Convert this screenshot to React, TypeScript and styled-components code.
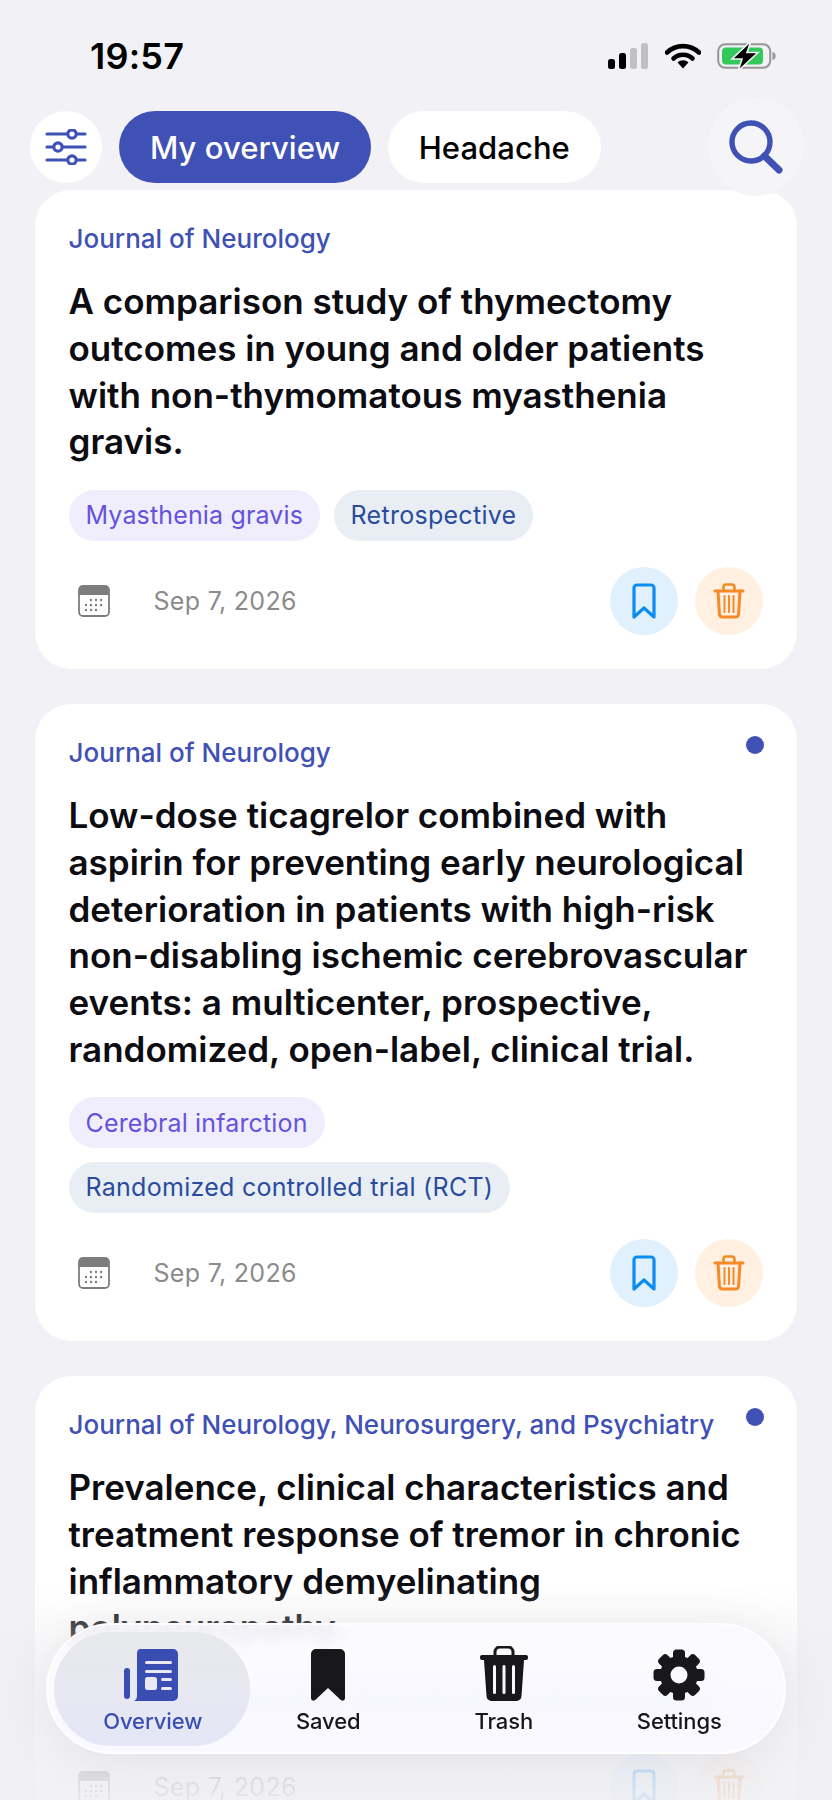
import * as React from 'react';
import styled, { createGlobalStyle } from 'styled-components';

const GlobalStyle = createGlobalStyle`
  html, body {
    margin: 0;
    padding: 0;
    background: #f1f1f6;
  }
  * {
    box-sizing: border-box;
  }
`;

const Screen = styled.div`
  position: relative;
  width: 832px;
  height: 1800px;
  overflow: hidden;
  background: #f1f1f6;
  font-family: Inter, "Noto Sans", sans-serif;
  color: #0c0c12;
`;

const StatusBar = styled.div`
  display: flex;
  align-items: center;
  justify-content: space-between;
  height: 111px;
  padding: 0 55px 0 90px;
`;

const Time = styled.div`
  font-size: 36px;
  font-weight: 600;
  letter-spacing: 0.2px;
  color: #000;
`;

const StatusIcons = styled.div`
  display: flex;
  align-items: center;
  gap: 16px;
`;

const Header = styled.div`
  position: relative;
  z-index: 1;
  display: flex;
  align-items: center;
  height: 72px;
  padding: 0 28px 0 30px;
`;

const RoundButton = styled.div`
  display: flex;
  align-items: center;
  justify-content: center;
  width: 72px;
  height: 72px;
  margin-right: 17px;
  border-radius: 50%;
  background: #fff;
`;

const Tab = styled.div<{ $active?: boolean }>`
  display: flex;
  align-items: center;
  height: 72px;
  margin-right: 16.5px;
  padding: 0 31px;
  border-radius: 36px;
  font-size: 31px;
  font-weight: 500;
  letter-spacing: 0.05px;
  color: ${(p) => (p.$active ? '#fff' : '#000')};
  background: ${(p) => (p.$active ? '#3f51b5' : '#fff')};
`;

const SearchButton = styled.div`
  display: flex;
  align-items: center;
  justify-content: center;
  width: 96px;
  height: 98px;
  margin: -13px 0 -13px auto;
  border-radius: 50%;
  background: rgba(244, 244, 248, 0.95);
`;

const List = styled.div`
  display: flex;
  flex-direction: column;
  gap: 35px;
  padding: 7px 35px 0;
`;

const Card = styled.article`
  padding: 34px 34px 34px 33.5px;
  border-radius: 36px;
  background: #fff;
`;

const CardTop = styled.div`
  display: flex;
  align-items: flex-start;
  justify-content: space-between;
  height: 32px;
`;

const Journal = styled.div`
  font-size: 26px;
  line-height: 30px;
  font-weight: 500;
  color: #3f51b5;
`;

const UnreadDot = styled.span`
  width: 18px;
  height: 18px;
  margin: -2px -1px 0 0;
  border-radius: 50%;
  background: #3f51b5;
`;

const Title = styled.h2`
  margin: 22px 0 0;
  font-size: 35px;
  line-height: 46.75px;
  font-weight: 555;
  color: #0c0c12;
`;

const Tags = styled.div`
  display: flex;
  flex-wrap: wrap;
  gap: 13.5px;
  margin-top: 24.5px;
`;

const Tag = styled.span<{ $kind: 'topic' | 'type' }>`
  display: inline-flex;
  align-items: center;
  height: 51px;
  padding: 0 17px;
  border-radius: 26px;
  font-size: 25px;
  letter-spacing: ${(p) => (p.$kind === 'topic' ? 0.15 : 0.28)}px;
  color: ${(p) => (p.$kind === 'topic' ? '#6552dc' : '#2a4c9c')};
  background: ${(p) => (p.$kind === 'topic' ? '#f0eefd' : '#e9eef5')};
`;

const CardFooter = styled.div`
  display: flex;
  align-items: center;
  margin-top: 26.5px;
`;

const DateIcon = styled.div`
  display: flex;
  width: 32px;
  margin-left: 9px;
  margin-right: 44px;
`;

const DateText = styled.span`
  font-size: 25px;
  letter-spacing: 0.3px;
  color: #8b8b8b;
`;

const Actions = styled.div`
  display: flex;
  gap: 17px;
  margin-left: auto;
`;

const ActionButton = styled.div<{ $tone: 'save' | 'remove' }>`
  display: flex;
  align-items: center;
  justify-content: center;
  width: 68px;
  height: 68px;
  border-radius: 50%;
  background: ${(p) => (p.$tone === 'save' ? '#e0f0fd' : '#fff0e2')};
`;

const BottomFade = styled.div`
  position: absolute;
  left: 0;
  right: 0;
  bottom: 0;
  height: 215px;
  background: linear-gradient(
    to bottom,
    rgba(240, 240, 244, 0) 0%,
    rgba(240, 240, 244, 0.5) 35%,
    rgba(240, 240, 244, 0.9) 100%
  );
`;

const NavBar = styled.nav`
  position: absolute;
  left: 46px;
  top: 1623px;
  display: grid;
  grid-template-columns: repeat(4, 175.5px);
  width: 740px;
  height: 131px;
  padding: 0 0 0 17px;
  border: 2px solid rgba(255, 255, 255, 0.9);
  border-radius: 66px;
  background: rgba(250, 250, 255, 0.9);
  backdrop-filter: blur(5px);
  box-shadow: 0 4px 50px rgba(60, 60, 80, 0.1);
`;

const NavItem = styled.div<{ $active?: boolean }>`
  position: relative;
  display: flex;
  flex-direction: column;
  align-items: center;
  padding-top: 22px;
  color: ${(p) => (p.$active ? '#3a4db3' : '#17171c')};

  ${(p) =>
    p.$active &&
    `
    &::before {
      content: '';
      position: absolute;
      top: 7px;
      bottom: 6px;
      left: -11px;
      right: -9px;
      border-radius: 58px;
      background: linear-gradient(to bottom, #e8e9ec 0%, #e7e8f0 45%, #e5e6f7 100%);
    }
  `}
`;

const NavIcon = styled.div`
  position: relative;
  display: flex;
  align-items: flex-end;
  justify-content: center;
  height: 54px;
`;

const NavLabel = styled.span`
  position: relative;
  margin-top: 6px;
  font-size: 22px;
  line-height: 28px;
  font-weight: 500;
  letter-spacing: -0.1px;
`;

const SignalIcon = () => (
  <svg width="41" height="26" viewBox="0 0 41 26">
    <rect x="0" y="16" width="7" height="10" rx="2.5" fill="#000" />
    <rect x="11" y="10" width="7" height="16" rx="2.5" fill="#000" />
    <rect x="22" y="5" width="7" height="21" rx="2.5" fill="#c1c1c5" />
    <rect x="33" y="0" width="7" height="26" rx="2.5" fill="#c1c1c5" />
  </svg>
);

const WifiIcon = () => (
  <svg width="36" height="26" viewBox="0 0 36 26" fill="none">
    <path d="M2 9.5C11 1 25 1 34 9.5" stroke="#000" strokeWidth="4.6" strokeLinecap="round" />
    <path d="M8.5 15.5C13.8 10.5 22.2 10.5 27.5 15.5" stroke="#000" strokeWidth="4.6" strokeLinecap="round" />
    <path d="M12.6 19.4C15.6 16.6 20.4 16.6 23.4 19.4L18 25.4Z" fill="#000" />
  </svg>
);

const BatteryIcon = () => (
  <svg width="60" height="30" viewBox="0 0 60 30" fill="none">
    <rect x="1.2" y="3.2" width="52" height="23.6" rx="7" stroke="#969698" strokeWidth="2" />
    <rect x="5" y="6.5" width="41" height="17" rx="4" fill="#34c759" />
    <path d="M55.5 11C58 11.6 58.6 13 58.6 15C58.6 17 58 18.4 55.5 19Z" fill="#969698" />
    <path d="M34 0L15 18H25L21 30L41 11.5H30Z" fill="#000" stroke="#f1f1f6" strokeWidth="1.6" />
  </svg>
);

const FilterIcon = () => (
  <svg width="42" height="36" viewBox="0 0 42 36" fill="none" stroke="#3f51b5" strokeWidth="3.2" strokeLinecap="round">
    <path d="M2 5H22M32 5H40" />
    <path d="M2 18H8M18 18H40" />
    <path d="M2 31H22M32 31H40" />
    <circle cx="27" cy="5" r="4.2" fill="#fff" />
    <circle cx="13" cy="18" r="4.2" fill="#fff" />
    <circle cx="27" cy="31" r="4.2" fill="#fff" />
  </svg>
);

const SearchIcon = () => (
  <svg width="54" height="54" viewBox="0 0 54 54" fill="none" stroke="#3f51b5" strokeLinecap="round">
    <circle cx="22" cy="22" r="19" strokeWidth="5.4" />
    <path d="M35.5 36L50 50" strokeWidth="7" />
  </svg>
);

const calendarDots = [
  [13, 15], [18, 15], [23, 15],
  [8, 20], [13, 20], [18, 20], [23, 20],
  [8, 25], [13, 25], [18, 25],
];

const CalendarIcon = () => (
  <svg width="32" height="32" viewBox="0 0 32 32" fill="none">
    <rect x="1" y="1" width="30" height="30" rx="4" fill="#fff" stroke="#7d7d7d" strokeWidth="1.8" />
    <path d="M1 5a4 4 0 0 1 4-4h22a4 4 0 0 1 4 4v5H1Z" fill="#7d7d7d" />
    <g fill="#7d7d7d">
      {calendarDots.map(([cx, cy]) => (
        <circle key={`${cx}-${cy}`} cx={cx} cy={cy} r="1.2" />
      ))}
    </g>
  </svg>
);

const BookmarkOutline = () => (
  <svg width="24" height="36" viewBox="0 0 24 36" fill="none">
    <path
      d="M2 5a3 3 0 0 1 3-3h14a3 3 0 0 1 3 3v29l-10-9-10 9Z"
      stroke="#0d8bf5"
      strokeWidth="3.2"
      strokeLinejoin="round"
    />
  </svg>
);

const TrashOutline = () => (
  <svg width="32" height="36" viewBox="0 0 32 36" fill="none" stroke="#f58a26" strokeLinecap="round" strokeLinejoin="round">
    <path d="M2 8H30" strokeWidth="3" />
    <path d="M10.5 8V4a2.5 2.5 0 0 1 2.5-2.5h6a2.5 2.5 0 0 1 2.5 2.5v4" strokeWidth="2.6" />
    <path d="M5 8l1.4 23a3 3 0 0 0 3 3h13.2a3 3 0 0 0 3-3L27 8" strokeWidth="3" />
    <path d="M11.5 13V29M16 13V29M20.5 13V29" strokeWidth="2" />
  </svg>
);

const NewsIcon = () => (
  <svg width="58" height="52" viewBox="0 0 58 52">
    <rect x="0" y="19" width="6" height="31" rx="3" fill="#3a4db3" />
    <path d="M16 0h33a5 5 0 0 1 5 5v42a5 5 0 0 1-5 5H10c2.5-1 3-3 3-6V4c0-2 1.5-4 3-4Z" fill="#3a4db3" />
    <rect x="21" y="12" width="27" height="3" rx="1.5" fill="#e8e9f4" />
    <rect x="21" y="21" width="27" height="3" rx="1.5" fill="#e8e9f4" />
    <rect x="21" y="28" width="12" height="13" rx="2.5" fill="#e8e9f4" />
    <rect x="37" y="29" width="11" height="3" rx="1.5" fill="#e8e9f4" />
    <rect x="37" y="38" width="11" height="3" rx="1.5" fill="#e8e9f4" />
  </svg>
);

const BookmarkSolid = () => (
  <svg width="34" height="52" viewBox="0 0 34 52">
    <path d="M0 5a5 5 0 0 1 5-5h24a5 5 0 0 1 5 5v44c0 2.5-2.5 3.5-4.5 1.7L17 39 4.5 50.7C2.5 52.5 0 51.5 0 49Z" fill="#17171c" />
  </svg>
);

const TrashSolid = () => (
  <svg width="48" height="55" viewBox="0 0 48 55">
    <path d="M15 9V6a5 5 0 0 1 5-5h8a5 5 0 0 1 5 5v3" fill="none" stroke="#17171c" strokeWidth="3" />
    <rect x="0" y="9" width="48" height="5" rx="2" fill="#17171c" />
    <path d="M4 14h40l-2.5 36a5 5 0 0 1-5 5h-25a5 5 0 0 1-5-5Z" fill="#17171c" />
    <rect x="13" y="19" width="3" height="29" rx="1.5" fill="#f8f8fd" />
    <rect x="22.5" y="19" width="3" height="29" rx="1.5" fill="#f8f8fd" />
    <rect x="32" y="19" width="3" height="29" rx="1.5" fill="#f8f8fd" />
  </svg>
);

const gearTeeth = [0, 45, 90, 135, 180, 225, 270, 315];

const GearIcon = () => (
  <svg width="52" height="52" viewBox="0 0 52 52">
    <mask id="gear-hole">
      <rect width="52" height="52" fill="#fff" />
      <circle cx="26" cy="26" r="8.5" fill="#000" />
    </mask>
    <g fill="#17171c" mask="url(#gear-hole)">
      <circle cx="26" cy="26" r="19" />
      {gearTeeth.map((angle) => (
        <rect key={angle} x="20" y="0.5" width="12" height="12" rx="3.5" transform={`rotate(${angle} 26 26)`} />
      ))}
    </g>
  </svg>
);

type Article = {
  journal: string;
  title: string;
  tags: { label: string; kind: 'topic' | 'type' }[];
  unread?: boolean;
};

const articles: Article[] = [
  {
    journal: 'Journal of Neurology',
    title: 'A comparison study of thymectomy outcomes in young and older patients with non-thymomatous myasthenia gravis.',
    tags: [
      { label: 'Myasthenia gravis', kind: 'topic' },
      { label: 'Retrospective', kind: 'type' },
    ],
  },
  {
    journal: 'Journal of Neurology',
    title: 'Low-dose ticagrelor combined with aspirin for preventing early neurological deterioration in patients with high-risk non-disabling ischemic cerebrovascular events: a multicenter, prospective, randomized, open-label, clinical trial.',
    tags: [
      { label: 'Cerebral infarction', kind: 'topic' },
      { label: 'Randomized controlled trial (RCT)', kind: 'type' },
    ],
    unread: true,
  },
  {
    journal: 'Journal of Neurology, Neurosurgery, and Psychiatry',
    title: 'Prevalence, clinical characteristics and treatment response of tremor in chronic inflammatory demyelinating polyneuropathy.',
    tags: [{ label: 'Chronic inflammatory demyelinating polyneuropathy', kind: 'topic' }],
    unread: true,
  },
];

const navItems = [
  { label: 'Overview', icon: <NewsIcon />, active: true },
  { label: 'Saved', icon: <BookmarkSolid /> },
  { label: 'Trash', icon: <TrashSolid /> },
  { label: 'Settings', icon: <GearIcon /> },
];

const App: React.FC = () => (
  <Screen>
    <GlobalStyle />
    <StatusBar>
      <Time>19:57</Time>
      <StatusIcons>
        <SignalIcon />
        <WifiIcon />
        <BatteryIcon />
      </StatusIcons>
    </StatusBar>
    <Header>
      <RoundButton>
        <FilterIcon />
      </RoundButton>
      <Tab $active>My overview</Tab>
      <Tab>Headache</Tab>
      <SearchButton>
        <SearchIcon />
      </SearchButton>
    </Header>
    <List>
      {articles.map((article) => (
        <Card key={article.title}>
          <CardTop>
            <Journal>{article.journal}</Journal>
            {article.unread ? <UnreadDot /> : null}
          </CardTop>
          <Title>{article.title}</Title>
          <Tags>
            {article.tags.map((tag) => (
              <Tag key={tag.label} $kind={tag.kind}>
                {tag.label}
              </Tag>
            ))}
          </Tags>
          <CardFooter>
            <DateIcon>
              <CalendarIcon />
            </DateIcon>
            <DateText>Sep 7, 2026</DateText>
            <Actions>
              <ActionButton $tone="save">
                <BookmarkOutline />
              </ActionButton>
              <ActionButton $tone="remove">
                <TrashOutline />
              </ActionButton>
            </Actions>
          </CardFooter>
        </Card>
      ))}
    </List>
    <BottomFade />
    <NavBar>
      {navItems.map((item) => (
        <NavItem key={item.label} $active={item.active}>
          <NavIcon>{item.icon}</NavIcon>
          <NavLabel>{item.label}</NavLabel>
        </NavItem>
      ))}
    </NavBar>
  </Screen>
);

export default App;
